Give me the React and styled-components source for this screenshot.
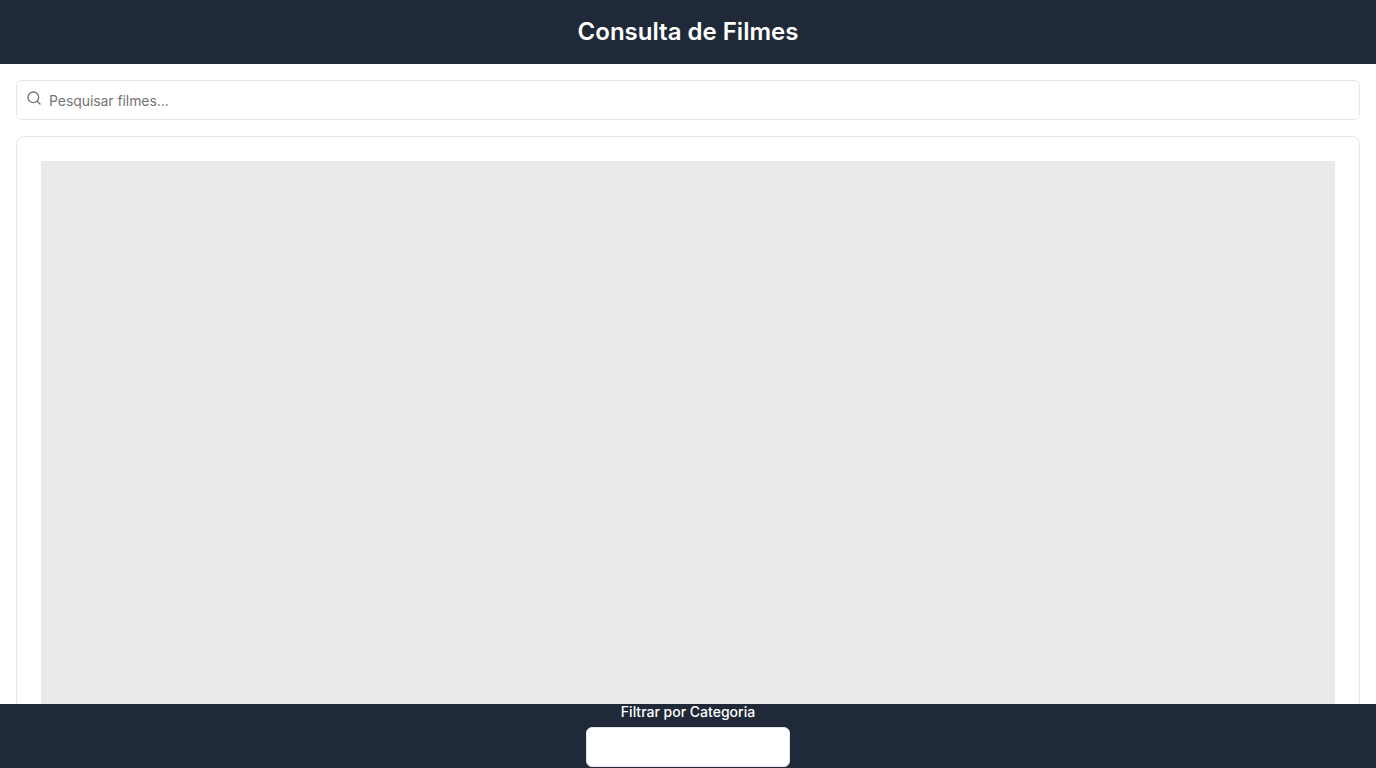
import React from 'react';
import styled, { createGlobalStyle } from 'styled-components';
import { Search } from 'lucide-react';

const GlobalStyle = createGlobalStyle`
  *, *::before, *::after { box-sizing: border-box; }
  body {
    margin: 0;
    background: #fff;
    color: #0a0a0a;
    font-family: Inter, sans-serif;
    line-height: 1.5;
  }
`;

const Page = styled.div`
  display: flex;
  flex-direction: column;
  height: 100vh;
  overflow: hidden;
`;

const Header = styled.header`
  flex: none;
  display: flex;
  align-items: center;
  justify-content: center;
  height: 64px;
  background: #1f2937;
  color: #fff;
`;

const Title = styled.h1`
  margin: 0;
  font-size: 24px;
  line-height: 32px;
  font-weight: 600;
`;

const Main = styled.main`
  flex: 1;
  min-height: 0;
  padding: 16px 16px 0;
  overflow: hidden;
`;

const SearchField = styled.label`
  position: relative;
  display: block;
  margin-bottom: 16px;
`;

const SearchIcon = styled(Search)`
  position: absolute;
  left: 10px;
  top: 10px;
  color: #737373;
`;

const SearchInput = styled.input`
  display: block;
  width: 100%;
  height: 40px;
  padding: 8px 12px 8px 32px;
  border: 1px solid #e5e5e5;
  border-radius: 6px;
  background: #fff;
  font: 14px/20px Inter, sans-serif;
  letter-spacing: -0.07px;
  outline: none;
  &::placeholder { color: #757575; opacity: 1; }
`;

const MovieCard = styled.article`
  padding: 24px;
  border: 1px solid #e5e5e5;
  border-radius: 8px;
`;

const Poster = styled.div`
  height: 720px;
  background: #eaeaea;
`;

const Footer = styled.footer`
  flex: none;
  display: flex;
  flex-direction: column;
  align-items: center;
  justify-content: center;
  gap: 8px;
  height: 64px;
  background: #1f2937;
  color: #fff;
`;

const FilterLabel = styled.span`
  font-size: 14px;
  line-height: 14px;
  font-weight: 500;
`;

const FilterSelect = styled.button`
  width: 204px;
  height: 40px;
  padding: 0;
  border: 1px solid #e5e5e5;
  border-radius: 6px;
  background: #fff;
`;

export default function App() {
  return (
    <Page>
      <GlobalStyle />
      <Header>
        <Title>Consulta de Filmes</Title>
      </Header>
      <Main>
        <SearchField>
          <SearchIcon size={16} />
          <SearchInput type="text" placeholder="Pesquisar filmes..." />
        </SearchField>
        <MovieCard>
          <Poster />
        </MovieCard>
      </Main>
      <Footer>
        <FilterLabel>Filtrar por Categoria</FilterLabel>
        <FilterSelect type="button" />
      </Footer>
    </Page>
  );
}
